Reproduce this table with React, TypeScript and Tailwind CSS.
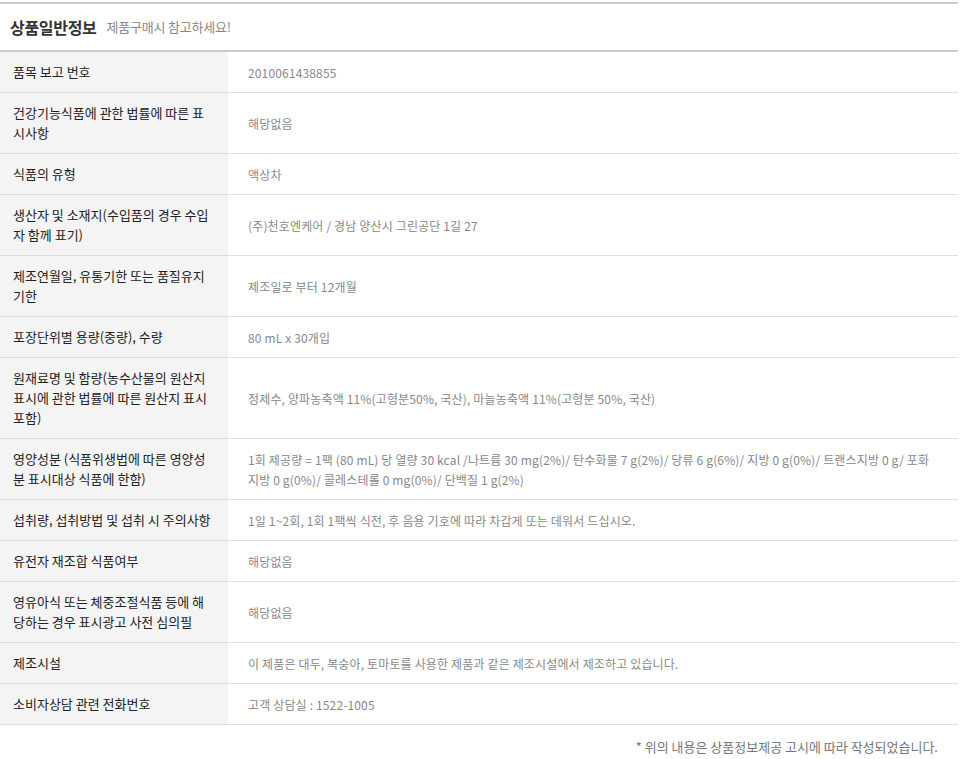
import React from "react";

type Row = { label: string[]; value: string[] };

const rows: Row[] = [
  { label: ["품목 보고 번호"], value: ["2010061438855"] },
  { label: ["건강기능식품에 관한 법률에 따른 표", "시사항"], value: ["해당없음"] },
  { label: ["식품의 유형"], value: ["액상차"] },
  { label: ["생산자 및 소재지(수입품의 경우 수입", "자 함께 표기)"], value: ["(주)천호엔케어 / 경남 양산시 그린공단 1길 27"] },
  { label: ["제조연월일, 유통기한 또는 품질유지", "기한"], value: ["제조일로 부터 12개월"] },
  { label: ["포장단위별 용량(중량), 수량"], value: ["80 mL x 30개입"] },
  {
    label: ["원재료명 및 함량(농수산물의 원산지", "표시에 관한 법률에 따른 원산지 표시", "포함)"],
    value: ["정제수, 양파농축액 11%(고형분50%, 국산), 마늘농축액 11%(고형분 50%, 국산)"],
  },
  {
    label: ["영양성분 (식품위생법에 따른 영양성", "분 표시대상 식품에 한함)"],
    value: [
      "1회 제공량 = 1팩 (80 mL) 당 열량 30 kcal /나트륨 30 mg(2%)/ 탄수화물 7 g(2%)/ 당류 6 g(6%)/ 지방 0 g(0%)/ 트랜스지방 0 g/ 포화",
      "지방 0 g(0%)/ 콜레스테롤 0 mg(0%)/ 단백질 1 g(2%)",
    ],
  },
  { label: ["섭취량, 섭취방법 및 섭취 시 주의사항"], value: ["1일 1~2회, 1회 1팩씩 식전, 후 음용 기호에 따라 차갑게 또는 데워서 드십시오."] },
  { label: ["유전자 재조합 식품여부"], value: ["해당없음"] },
  { label: ["영유아식 또는 체중조절식품 등에 해", "당하는 경우 표시광고 사전 심의필"], value: ["해당없음"] },
  { label: ["제조시설"], value: ["이 제품은 대두, 복숭아, 토마토를 사용한 제품과 같은 제조시설에서 제조하고 있습니다."] },
  { label: ["소비자상담 관련 전화번호"], value: ["고객 상담실 : 1522-1005"] },
];

export default function App() {
  return (
    <div
      className="w-[964px] min-h-[759px] bg-white"
      style={{ fontFamily: '"Noto Sans CJK KR", "Noto Sans", sans-serif' }}
    >
      <div className="w-[958px] pt-[2px]">
        <div className="border-t-2 border-b-2 border-[#cccccc] h-[50px] flex items-center pl-[10px] gap-[10px]">
          <span className="text-[16px] font-bold text-[#333333] tracking-[-0.3px]">상품일반정보</span>
          <span className="text-[13px] text-[#888888] tracking-[-0.2px]">제품구매시 참고하세요!</span>
        </div>
        <div>
          {rows.map((r, i) => (
            <div key={i} className="flex border-b border-[#dddddd]">
              <div className="w-[228px] shrink-0 bg-[#f4f4f4] pl-[13px] pt-[10px] pb-[10px] text-[13px] leading-[20px] text-[#222222] whitespace-nowrap flex flex-col justify-center">
                {r.label.map((l, j) => (
                  <div key={j}>{l}</div>
                ))}
              </div>
              <div className="flex-1 pl-[20px] pt-[11px] pb-[9px] text-[12px] leading-[20px] text-[#888888] whitespace-nowrap flex flex-col justify-center tracking-[0.15px]">
                {r.value.map((l, j) => (
                  <div key={j}>{l}</div>
                ))}
              </div>
            </div>
          ))}
        </div>
        <div className="flex justify-end pr-[20px] pt-[12px] text-[13px] leading-[20px] text-[#777777]">
          * 위의 내용은 상품정보제공 고시에 따라 작성되었습니다.
        </div>
      </div>
    </div>
  );
}
